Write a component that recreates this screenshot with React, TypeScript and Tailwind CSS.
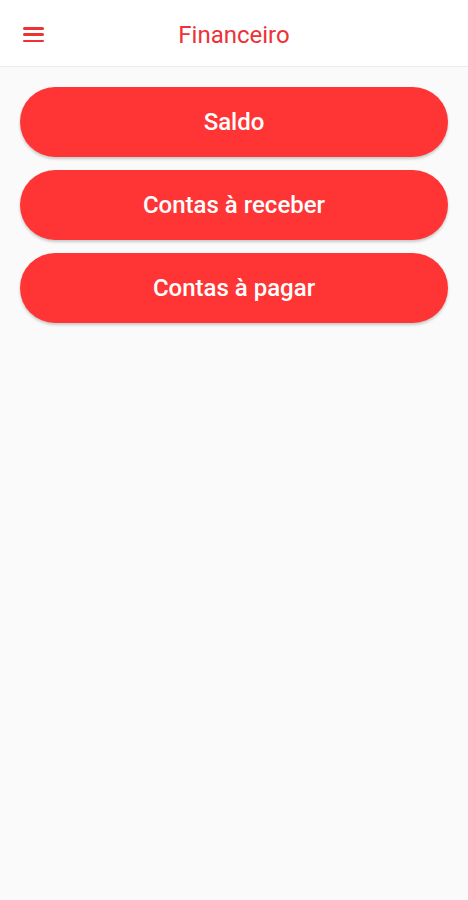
import React from 'react';

const items = ['Saldo', 'Contas à receber', 'Contas à pagar'];

export default function App() {
  return (
    <div className="min-h-[900px] w-full bg-[#fafafa] font-['Roboto',sans-serif]">
      <header className="relative flex h-[67px] items-center justify-center border-b border-[#ececec] bg-white">
        <button className="absolute left-[23px] top-[27px] flex h-[15px] w-[21px] flex-col justify-between">
          <span className="block h-[2.5px] w-full rounded bg-[#ec3237]" />
          <span className="block h-[2.5px] w-full rounded bg-[#ec3237]" />
          <span className="block h-[2.5px] w-full rounded bg-[#ec3237]" />
        </button>
        <h1 className="mt-[3px] text-[24px] font-normal text-[#ec3237]">Financeiro</h1>
      </header>
      <main className="flex flex-col gap-[13px] px-[20px] pt-[20px]">
        {items.map((label) => (
          <button
            key={label}
            className="flex h-[70px] w-full items-center justify-center rounded-full bg-[#ff3535] text-[24px] font-medium text-white shadow-[0_2px_3px_rgba(0,0,0,0.2)]"
          >
            {label}
          </button>
        ))}
      </main>
    </div>
  );
}
